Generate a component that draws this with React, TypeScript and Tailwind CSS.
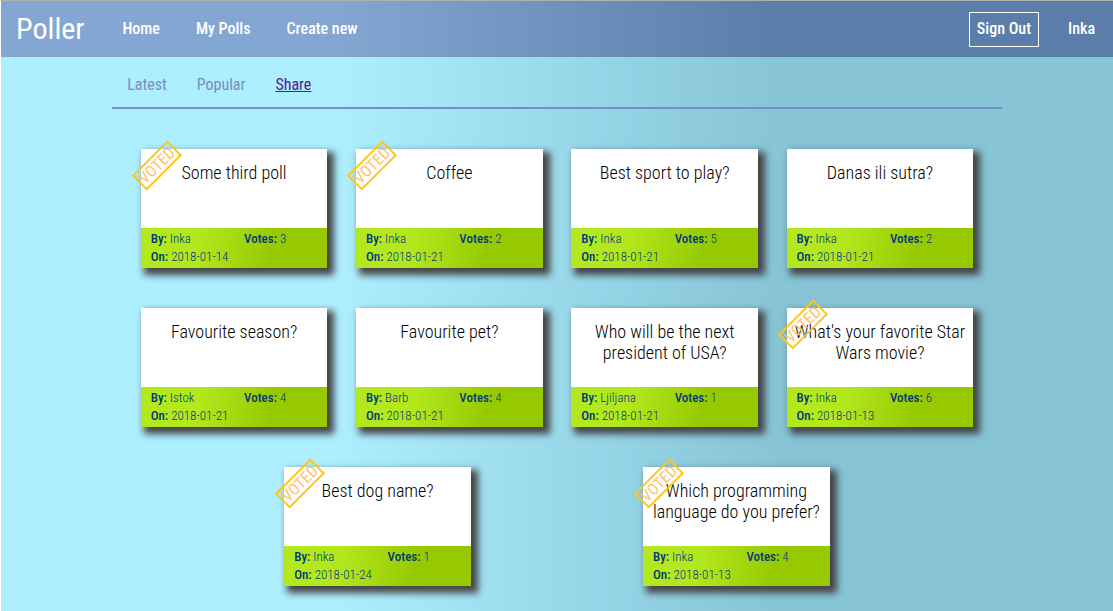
type Poll = { title: string; by: string; votes: number; on: string; voted?: boolean };

const polls: Poll[] = [
  { title: "Some third poll", by: "Inka", votes: 3, on: "2018-01-14", voted: true },
  { title: "Coffee", by: "Inka", votes: 2, on: "2018-01-21", voted: true },
  { title: "Best sport to play?", by: "Inka", votes: 5, on: "2018-01-21" },
  { title: "Danas ili sutra?", by: "Inka", votes: 2, on: "2018-01-21" },
  { title: "Favourite season?", by: "Istok", votes: 4, on: "2018-01-21" },
  { title: "Favourite pet?", by: "Barb", votes: 4, on: "2018-01-21" },
  { title: "Who will be the next president of USA?", by: "Ljiljana", votes: 1, on: "2018-01-21" },
  { title: "What's your favorite Star Wars movie?", by: "Inka", votes: 6, on: "2018-01-13", voted: true },
  { title: "Best dog name?", by: "Inka", votes: 1, on: "2018-01-24", voted: true },
  { title: "Which programming language do you prefer?", by: "Inka", votes: 4, on: "2018-01-13", voted: true },
];

function PollCard({ poll }: { poll: Poll }) {
  return (
    <article className="relative flex min-h-[119px] w-[21%] flex-col bg-white shadow-[5px_5px_7px_2px_#444444]">
      <h2 className="grow px-2 pt-[13px] text-center text-[18px] leading-[21px] font-light text-black">
        <a href="#poll">{poll.title}</a>
      </h2>
      <div className="grid grid-cols-2 bg-[linear-gradient(100deg,#b4e81e_30%,#97c900_70%)] px-[10px] pt-[2px] pb-[2px] text-[13px] leading-[18px] font-light text-[#003a78]">
        <p><b className="font-medium">By:</b> {poll.by}</p>
        <p className="pl-[10px]"><b className="font-medium">Votes:</b> {poll.votes}</p>
        <p><b className="font-medium">On:</b> {poll.on}</p>
      </div>
      {poll.voted && (
        <span className="absolute -top-2 -left-[9px] flex h-[48px] w-[50px] items-center justify-center">
          <span className="-rotate-45 border-2 border-[#ffc61a] px-px text-[16px] leading-[17px] text-[#ffc266]">VOTED</span>
        </span>
      )}
    </article>
  );
}

export default function App() {
  return (
    <div className="min-h-screen border-t border-l border-t-[#b0b0b0] border-l-white bg-[linear-gradient(90deg,#adeeff_30%,#86c4d6_70%)] font-['Roboto_Condensed','Liberation_Sans_Narrow',sans-serif]">
      <header className="flex h-[56px] items-center bg-[linear-gradient(90deg,#84a6d3_30%,#5b7da9_70%)] px-[15px] pr-[18px] text-[16px] text-white">
        <a href="#top" className="text-[30px] leading-[36px]">Poller</a>
        <nav className="ml-[38px] flex gap-[36px] font-medium">
          <a href="#home">Home</a>
          <a href="#mine">My Polls</a>
          <a href="#new">Create new</a>
        </nav>
        <div className="ml-auto flex items-center gap-[29px] font-medium">
          <button className="h-[35px] border border-white px-[7px]">Sign Out</button>
          <a href="#user">Inka</a>
        </div>
      </header>
      <main className="mx-auto w-4/5">
        <nav className="flex h-[52px] items-center gap-[30px] border-b-2 border-[#6f91c4] px-[15px] pt-[5px] text-[16px] text-[#7490bd]">
          <a href="#latest">Latest</a>
          <a href="#popular">Popular</a>
          <a href="#share" className="text-[#551a8b] underline">Share</a>
        </nav>
        <section className="flex flex-wrap justify-evenly gap-y-[40px] pt-[40px] pb-[24px]">
          {polls.map((p) => <PollCard key={p.title} poll={p} />)}
        </section>
      </main>
    </div>
  );
}
